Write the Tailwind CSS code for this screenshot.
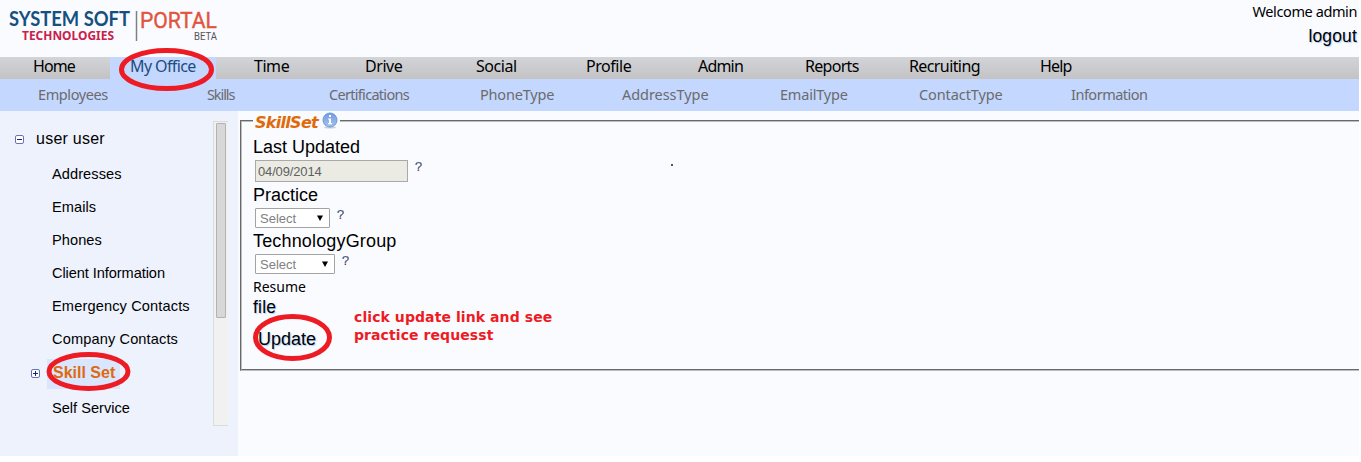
<!DOCTYPE html>
<html lang="en">
<head>
<meta charset="utf-8">
<title>System Soft Portal</title>
<script src="https://cdn.jsdelivr.net/npm/@tailwindcss/browser@4"></script>
</head>
<body class="bg-white w-[1361px] h-[462px] overflow-hidden text-black font-['Liberation_Sans',sans-serif]">
<div class="relative w-[1359px] h-[456px] bg-[#fafbff] flex flex-col">
  <header class="h-[57px] flex justify-between">
    <svg class="w-[230px] h-[57px]" viewBox="0 0 230 57" font-family="'Noto Sans',sans-serif">
      <text x="9" y="26" font-size="20" font-family="Lato,sans-serif" font-weight="700" fill="#15507f" textLength="121" lengthAdjust="spacingAndGlyphs">SYSTEM SOFT</text>
      <text x="22" y="40" font-size="12" font-weight="700" fill="#c8204a" textLength="92" lengthAdjust="spacingAndGlyphs">TECHNOLOGIES</text>
      <path d="M136.500 11v30" stroke="#808080" stroke-width="1.500"/>
      <text x="140" y="28" font-size="22.500" font-family="Roboto,sans-serif" font-weight="400" fill="#e2543f" stroke="#e2543f" stroke-width=".4" textLength="77" lengthAdjust="spacingAndGlyphs">PORTAL</text>
      <text x="194" y="39.500" font-size="10.500" font-family="Roboto,sans-serif" fill="#555" textLength="23" lengthAdjust="spacingAndGlyphs">BETA</text>
    </svg>
    <div class="flex flex-col items-end pr-[2px] pt-[2px]">
      <span class="font-['Noto_Sans',sans-serif] text-[14.500px] leading-[19px] tracking-[-0.4px]">Welcome admin</span>
      <a class="text-[17.500px] leading-[30px] [text-shadow:1px_1px_1px_#a4cdf2] tracking-[0.15px]">logout</a>
    </div>
  </header>
  <nav class="h-[22px] flex bg-linear-to-b from-[#d3d4d8] to-[#c3c3c5] font-['Noto_Sans',sans-serif] text-[16px] leading-[19px] tracking-[-0.45px] whitespace-nowrap">
    <a class="w-[110px] pl-[33px] tracking-[-0.9px]">Home</a>
    <a class="w-[106px] pl-[20px] bg-[#c3d7ff] text-[#1d4c7c] tracking-[-0.6px]">My Office</a>
    <a class="w-[111px] pl-[38px]">Time</a>
    <a class="w-[111px] pl-[38px]">Drive</a>
    <a class="w-[110px] pl-[38px]">Social</a>
    <a class="w-[112px] pl-[38px]">Profile</a>
    <a class="w-[107px] pl-[38px] tracking-[-0.8px]">Admin</a>
    <a class="w-[104px] pl-[38px] tracking-[-0.7px]">Reports</a>
    <a class="w-[131px] pl-[38px] tracking-[-0.6px]">Recruiting</a>
    <a class="w-[111px] pl-[38px] tracking-[-0.8px]">Help</a>
  </nav>
  <nav class="h-[32px] flex pl-[38px] bg-[#c3d7ff] text-[#6b6b6b] font-['Noto_Sans',sans-serif] text-[14.500px] leading-[31px] tracking-[-0.4px] whitespace-nowrap">
    <a class="w-[169px]">Employees</a>
    <a class="w-[122px] tracking-[-1.1px]">Skills</a>
    <a class="w-[151px] tracking-[-0.7px]">Certifications</a>
    <a class="w-[142px] tracking-[-0.200px]">PhoneType</a>
    <a class="w-[158px] tracking-[-0.05px]">AddressType</a>
    <a class="w-[139px] tracking-[-0.200px]">EmailType</a>
    <a class="w-[152px] tracking-[-0.100px]">ContactType</a>
    <a class="tracking-[-0.5px]">Information</a>
  </nav>
  <div class="flex flex-1">
    <aside class="w-[238px] bg-[#edf2fd] flex justify-between pr-[10px] pt-[10px]">
      <div class="text-[14.600px] leading-[33px]">
        <div class="flex items-center h-[35px] pl-[15px] gap-[12px]">
          <svg class="w-[9px] h-[9px] mt-[2px]" viewBox="0 0 9 9"><rect x=".5" y=".5" width="8" height="8" rx="1.500" fill="#fff" stroke="#6874ad"/><path d="M2 4.500h5" stroke="#1d1d8c"/></svg>
          <span class="text-[16px] tracking-[0.25px]">user user</span>
        </div>
        <ul class="pl-[52px] pt-[2px] tracking-[0.07px]">
          <li>Addresses</li><li>Emails</li><li>Phones</li><li class="tracking-[-0.08px]">Client Information</li><li class="tracking-[0.130px]">Emergency Contacts</li><li class="tracking-[0.12px]">Company Contacts</li>
        </ul>
        <div class="flex items-center h-[36px] pl-[31px] gap-[7px]">
          <svg class="w-[9px] h-[9px] -mt-[2px]" viewBox="0 0 9 9"><rect x=".5" y=".5" width="8" height="8" rx="1.500" fill="#fff" stroke="#6874ad"/><path d="M2 4.500h5M4.500 2v5" stroke="#1d1d8c"/></svg>
          <span class="h-[30px] leading-[28px] w-[73px] pl-[6px] bg-[#d9e6fd] text-[#dd6a10] font-bold text-[16px] whitespace-nowrap">Skill Set</span>
        </div>
        <div class="pl-[52px]">Self Service</div>
      </div>
      <div class="w-[15px] h-[305px] bg-[#f1f1f1] border-l border-t border-b border-[#dcdcdc] pl-[2px] pt-[1px]">
        <div class="w-[10px] h-[195px] bg-[#d8d8d8] border border-[#b3b3b3] rounded-[1px]"></div>
      </div>
    </aside>
    <main class="flex-1 pl-[2px] pt-[9px]">
      <section class="h-[251px] border border-r-0 border-t-[#696969] border-l-[#696969] border-b-[#bdbdbd]">
        <div class="relative h-full border border-r-0 border-t-[#bdbdbd] border-l-[#bdbdbd] border-b-[#696969] pl-[11px] pt-[15px]">
        <div class="absolute left-[11px] top-[-9px] h-[20px] w-[87px] bg-[#fafbff] flex pl-[2px]">
          <span class="w-[67px] font-['DejaVu_Sans',sans-serif] font-bold italic text-[16px] leading-[20px] tracking-[-0.7px] text-[#e06a0a]">SkillSet</span>
          <svg class="w-[16px] h-[17px] -mt-[1px]" viewBox="0 0 16 17"><defs><linearGradient id="g" x2="0" y2="1"><stop stop-color="#729be0"/><stop offset="1" stop-color="#a3c4f0"/></linearGradient></defs><ellipse cx="8" cy="15.500" rx="6" ry="1" fill="#cfcfd4"/><circle cx="8" cy="8" r="7" fill="url(#g)" stroke="#6c97dc"/><path d="M7 3h2v2H7zM6 6.500h3V11h1v1.200H6V11h1V7.500H6z" fill="#fff"/></svg>
        </div>
        <div class="text-[18px] leading-[20px]">Last Updated</div>
        <div class="flex pl-[2px] pt-[3px] h-[28px]">
          <div class="w-[153px] h-[22px] border border-[#a9a9a9] bg-[#ebebe4] pl-[2px] text-[13px] leading-[21px] tracking-[-0.15px] text-[#606060]">04/09/2014</div>
          <span class="h-[14px] ml-[7px] text-[13px] leading-[14px] text-transparent bg-clip-text bg-linear-to-b from-[#4c5580] from-70% to-[#d01840] to-70% [-webkit-text-stroke:0.2px_#62627c80]">?</span>
        </div>
        <div class="text-[18px] leading-[20px]">Practice</div>
        <div class="flex pl-[2px] pt-[3px] h-[26px]">
          <div class="w-[75px] h-[20px] border border-[#a3a3a3] bg-white flex justify-between items-center pl-[4px] pr-[5px] text-[13px] text-[#808080] rounded-[1px]"><span class="pt-px">Select</span><svg class="w-[8px] h-[8px]" viewBox="0 0 8 8"><path d="M1 1.500h6L4 7z" fill="#000"/></svg></div>
          <span class="h-[14px] ml-[7px] text-[13px] leading-[14px] text-transparent bg-clip-text bg-linear-to-b from-[#4c5580] from-70% to-[#d01840] to-70% [-webkit-text-stroke:0.2px_#62627c80]">?</span>
        </div>
        <div class="text-[18px] leading-[20px] tracking-[0.160px]">TechnologyGroup</div>
        <div class="flex pl-[2px] pt-[3px] h-[26px]">
          <div class="w-[80px] h-[20px] border border-[#a3a3a3] bg-white flex justify-between items-center pl-[4px] pr-[5px] text-[13px] text-[#808080] rounded-[1px]"><span class="pt-px">Select</span><svg class="w-[8px] h-[8px]" viewBox="0 0 8 8"><path d="M1 1.500h6L4 7z" fill="#000"/></svg></div>
          <span class="h-[14px] ml-[7px] text-[13px] leading-[14px] text-transparent bg-clip-text bg-linear-to-b from-[#4c5580] from-70% to-[#d01840] to-70% [-webkit-text-stroke:0.2px_#62627c80]">?</span>
        </div>
        <div class="font-['Noto_Sans',sans-serif] text-[14px] leading-[20px]">Resume</div>
        <div class="text-[17.500px] leading-[20px] tracking-[0.200px] [text-shadow:1px_1px_1px_#a4cdf2]">file</div>
        <div class="pl-[5px] pt-[12px] text-[18px] leading-[20px] [text-shadow:1px_1px_1px_#a4cdf2]">Update</div>
        </div>
      </section>
    </main>
  </div>
  <p class="absolute left-[354px] top-[308px] font-['DejaVu_Sans',sans-serif] font-bold text-[14px] leading-[18px] tracking-[0.08px] text-[#ed1c24] whitespace-nowrap">click update link and see<br>practice requesst</p>
  <span class="absolute left-[671px] top-[164px] w-[2px] h-[2px] bg-[#555]"></span>
  <svg class="absolute left-0 top-0 w-[1359px] h-[456px]" viewBox="0 0 1359 456" fill="none" stroke="#ed1c24" stroke-width="5">
    <ellipse cx="166.500" cy="69.500" rx="45" ry="19"/>
    <ellipse cx="88.500" cy="371.500" rx="39.500" ry="17"/>
    <ellipse cx="292.500" cy="337.500" rx="37" ry="21"/>
  </svg>
</div>
</body>
</html>
